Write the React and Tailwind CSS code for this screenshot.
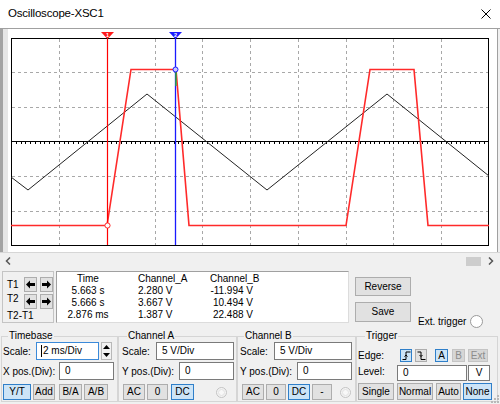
import React from 'react'

const sans = "font-['Liberation_Sans',Arial,sans-serif]"

function Btn({ className = '', active, disabled, children }) {
  const look = active
    ? 'bg-[#cce4f7] border-[#2f7fc9]'
    : disabled
    ? 'bg-[#d6d6d6] border-[#c4c4c4] text-[#8c8c8c]'
    : 'bg-[#e1e1e1] border-[#adadad]'
  return (
    <div className={`flex items-center justify-center border text-[10px] leading-none ${look} ${className}`}>
      {children}
    </div>
  )
}

function Field({ className = '', focused, children }) {
  return (
    <div
      className={`flex items-center bg-white border text-[10px] leading-none ${
        focused ? 'border-[#3b8ad9]' : 'border-[#7a7a7a]'
      } ${className}`}
    >
      {children}
    </div>
  )
}

function Radio({ className = '' }) {
  return (
    <div className={`flex items-center justify-center w-[11px] h-[11px] rounded-full border border-[#c4c4c4] bg-[#f4f4f4] ${className}`}>
      <div className="w-[7px] h-[7px] rounded-full border border-[#e2e2e2] bg-[#f8f8f8]" />
    </div>
  )
}

function Arrow({ dir }) {
  return (
    <Btn className="w-[13px] h-[15px] bg-[#dadada]">
      <svg width="9" height="9" viewBox="0 0 9 9">
        {dir === 'left' ? (
          <polygon points="0,4.5 4,0.5 4,3 9,3 9,6 4,6 4,8.5" fill="#000" />
        ) : (
          <polygon points="9,4.5 5,0.5 5,3 0,3 0,6 5,6 5,8.5" fill="#000" />
        )}
      </svg>
    </Btn>
  )
}

function Scope() {
  // grid columns, leaving out the one under cursor 1
  const vx = [59, 155, 202, 250, 298, 346, 393, 441]
  const hy = [72, 107, 176, 211]
  const ticks = []
  for (let i = 1; i < 100; i++) ticks.push(Math.round(11 + i * 4.78) + 0.5)
  const red = '11,225.5 107,225.5 131,69.5 176,69.5 189,225.5 346,225.5 370,69.5 414,69.5 428,225.5 489,225.5'
  const tri = '11,177 28,190 147,94 267,190 387,94 489,176'
  return (
    <svg width="489" height="223" viewBox="8 29 489 223" className="block bg-white">
      {vx.map((x) => (
        <line key={x} x1={x + 0.5} y1="39" x2={x + 0.5} y2="245" stroke="#a8a8a8" strokeDasharray="3 3" />
      ))}
      {hy.map((y) => (
        <line key={y} x1="12" y1={y + 0.5} x2="489" y2={y + 0.5} stroke="#a8a8a8" strokeDasharray="3 3" />
      ))}
      <line x1="11" y1="141.5" x2="489" y2="141.5" stroke="#000" />
      {ticks.filter((x) => x < 489).map((x) => (
        <line key={x} x1={x} y1="141" x2={x} y2="144" stroke="#000" />
      ))}
      <rect x="11.5" y="38.5" width="477" height="207" fill="none" stroke="#000" />
      <polyline points={tri} fill="none" stroke="#222" strokeWidth="1" />
      <polyline points={red} fill="none" stroke="#ff2a2a" strokeWidth="1.6" />
      <line x1="107.5" y1="39" x2="107.5" y2="245" stroke="#ff0000" strokeWidth="1.2" />
      <line x1="175.5" y1="38" x2="175.5" y2="245" stroke="#1a1aff" strokeWidth="1.3" />
      <line x1="176" y1="72" x2="176" y2="86" stroke="#22c022" strokeWidth="1.3" />
      <circle cx="175.5" cy="69.5" r="2.5" fill="#c8c8ff" stroke="#1a1aff" />
      <circle cx="107.5" cy="225.5" r="2.6" fill="#fff" stroke="#ff2a2a" />
      <polygon points="101,32 114,32 107.5,39" fill="#ff1a1a" />
      <text x="107.5" y="36.5" fontSize="5.5" fill="#fff" textAnchor="middle" fontFamily="Liberation Sans, sans-serif" fontWeight="bold">1</text>
      <polygon points="169,32 182,32 175.5,39" fill="#1a1aff" />
      <text x="175.5" y="36.5" fontSize="5.5" fill="#fff" textAnchor="middle" fontFamily="Liberation Sans, sans-serif" fontWeight="bold">2</text>
    </svg>
  )
}

function Chevron({ dir }) {
  return (
    <svg width="6" height="8" viewBox="0 0 6 8">
      <path d={dir === 'left' ? 'M5 0.5 L1.5 4 L5 7.5' : 'M1 0.5 L4.5 4 L1 7.5'} fill="none" stroke="#555" strokeWidth="1.5" />
    </svg>
  )
}

export default function App() {
  return (
    <div className={`relative w-[500px] h-[404px] bg-[#f0f0f0] overflow-hidden text-black ${sans}`}>
      {/* title bar */}
      <div className="h-[29px] bg-white flex items-center justify-between pl-[8px] pr-[9px] border-b border-[#a0a0a0]">
        <span className="text-[11.5px] tracking-[-0.2px]">Oscilloscope-XSC1</span>
        <svg width="10" height="10" viewBox="0 0 10 10">
          <path d="M0.5 0.5 L9.5 9.5 M9.5 0.5 L0.5 9.5" stroke="#000" strokeWidth="1" />
        </svg>
      </div>

      {/* scope display */}
      <div className="flex h-[223px]">
        <div className="w-[3px] bg-[#a3a3a3]" />
        <div className="w-[5px] bg-[#e6e6e6]" />
        <Scope />
        <div className="w-[1px] bg-[#a0a0a0]" />
        <div className="flex-1 bg-[#f0f0f0]" />
      </div>

      {/* scrollbar */}
      <div className="h-[17px] flex items-center border-t border-[#d6d6d6] bg-[#f0f0f0]">
        <div className="ml-[5px]">
          <Chevron dir="left" />
        </div>
        <div className="flex-1" />
        <div className="w-[15px] h-[9px] bg-[#cdcdcd]" />
        <div className="ml-[7px] mr-[6px]">
          <Chevron dir="right" />
        </div>
      </div>

      {/* readout row */}
      <div className="h-[58px] flex items-start pt-[2px] text-[10px]">
        <div className="ml-[2px] w-[52px] h-[52px] border border-[#c4c4c4] pl-[4px] flex flex-col">
          <div className="flex items-center h-[15px] mt-[5px]">
            <span className="w-[18px] -mt-[1px]">T1</span>
            <Arrow dir="left" />
            <div className="ml-[3px]">
              <Arrow dir="right" />
            </div>
          </div>
          <div className="flex items-center h-[14px] mt-[2px]">
            <span className="w-[18px] -mt-[6px]">T2</span>
            <Arrow dir="left" />
            <div className="ml-[3px]">
              <Arrow dir="right" />
            </div>
          </div>
          <div className="leading-[12px] mt-[2px]">T2-T1</div>
        </div>

        <div className="ml-[2px] w-[293px] h-[52px] bg-white border border-t-[#a0a0a0] border-l-[#a0a0a0] border-r-[#dcdcdc] border-b-[#dcdcdc] pt-[1px] leading-[12px]">
          {[
            ['Time', 'Channel_A', 'Channel_B'],
            ['5.663 s', '2.280 V', '-11.994 V'],
            ['5.666 s', '3.667 V', '10.494 V'],
            ['2.876 ms', '1.387 V', '22.488 V'],
          ].map((r, i) => (
            <div key={i} className="flex">
              <div className="w-[62px] text-center">{r[0]}</div>
              <div className="w-[19px]" />
              <div className="w-[62px]">{r[1]}</div>
              <div className={`w-[53px] ${i === 0 ? 'pl-[10px] text-left' : 'text-right'}`}>{r[2]}</div>
            </div>
          ))}
        </div>

        <div className="ml-[6px] w-[56px] flex flex-col">
          <Btn className="mt-[6px] h-[19px] text-[10px]">Reverse</Btn>
          <Btn className="mt-[6px] h-[20px] text-[10px]">Save</Btn>
        </div>

        <div className="ml-[7px] mt-[44px] flex items-center h-[13px]">
          <span>Ext. trigger</span>
          <div className="ml-[4px] w-[13px] h-[13px] rounded-full border border-[#9a9a9a] bg-white" />
        </div>
      </div>

      {/* control groups */}
      <div className="flex mt-[3px] text-[10px]">
        <fieldset className="ml-[1px] w-[117px] h-[72px] border border-[#d5d5d5]">
          <legend className="ml-[6px] px-[1px] leading-[12px]">Timebase</legend>
          <div className="flex items-center h-[18px] pl-[1px]">
            <span className="w-[33px]">Scale:</span>
            <Field focused className="w-[63px] h-[18px] pl-[4px]">
              <span className="w-[1px] h-[12px] bg-black" />
              <span className="ml-[1px]">2 ms/Div</span>
            </Field>
            <div className="ml-[2px] w-[11px] h-[18px] border border-[#b8b8b8] bg-[#f2f2f2] flex flex-col items-center justify-around">
              <svg width="7" height="4" viewBox="0 0 7 4">
                <polygon points="0,4 3.5,0 7,4" fill="#000" />
              </svg>
              <svg width="7" height="4" viewBox="0 0 7 4">
                <polygon points="0,0 3.5,4 7,0" fill="#000" />
              </svg>
            </div>
          </div>
          <div className="flex items-center h-[18px] mt-[2px] pl-[1px]">
            <span className="w-[56px]">X pos.(Div):</span>
            <Field className="w-[55px] h-[18px] pl-[5px]">0</Field>
          </div>
          <div className="flex mt-[4px] h-[16px] pl-[1px]">
            <Btn active className="w-[28px]">Y/T</Btn>
            <Btn className="w-[22px] ml-[2px]">Add</Btn>
            <Btn className="w-[23px] ml-[4px]">B/A</Btn>
            <Btn className="w-[24px] ml-[2px]">A/B</Btn>
          </div>
        </fieldset>

        <fieldset className="w-[119px] h-[72px] border border-[#d5d5d5]">
          <legend className="ml-[8px] px-[1px] leading-[12px]">Channel A</legend>
          <div className="flex items-center h-[18px] pl-[3px]">
            <span className="w-[34px]">Scale:</span>
            <Field className="w-[78px] h-[18px] pl-[5px]">5 V/Div</Field>
          </div>
          <div className="flex items-center h-[18px] mt-[2px] pl-[3px]">
            <span className="w-[57px]">Y pos.(Div):</span>
            <Field className="w-[55px] h-[18px] pl-[5px]">0</Field>
          </div>
          <div className="flex items-center mt-[4px] h-[16px] pl-[4px]">
            <Btn className="w-[22px] h-[16px]">AC</Btn>
            <Btn className="w-[21px] h-[16px] ml-[2px]">0</Btn>
            <Btn active className="w-[23px] h-[16px] ml-[3px]">DC</Btn>
            <Radio className="ml-[22px]" />
          </div>
        </fieldset>

        <fieldset className="w-[119px] h-[72px] border border-[#d5d5d5]">
          <legend className="ml-[6px] px-[1px] leading-[12px]">Channel B</legend>
          <div className="flex items-center h-[18px] pl-[2px]">
            <span className="w-[34px]">Scale:</span>
            <Field className="w-[78px] h-[18px] pl-[5px]">5 V/Div</Field>
          </div>
          <div className="flex items-center h-[18px] mt-[2px] pl-[2px]">
            <span className="w-[57px]">Y pos.(Div):</span>
            <Field className="w-[55px] h-[18px] pl-[5px]">0</Field>
          </div>
          <div className="flex items-center mt-[4px] h-[16px] pl-[4px]">
            <Btn className="w-[22px] h-[16px]">AC</Btn>
            <Btn className="w-[20px] h-[16px] ml-[2px]">0</Btn>
            <Btn active className="w-[22px] h-[16px] ml-[2px]">DC</Btn>
            <Btn className="w-[20px] h-[16px] ml-[2px]">-</Btn>
            <Radio className="ml-[8px]" />
          </div>
        </fieldset>

        <fieldset className="w-[142px] h-[72px] border border-[#d5d5d5]">
          <legend className="ml-[8px] px-[1px] leading-[12px]">Trigger</legend>
          <div className="flex items-center mt-[7px] h-[13px] pl-[1px]">
            <span className="w-[42px]">Edge:</span>
            <Btn active className="w-[12px] h-[13px]">
              <svg width="9" height="9" viewBox="0 0 9 9">
                <path d="M0.5 8.5 H4 V1 H8.5 M2.5 5.5 L4 4 L5.5 5.5" fill="none" stroke="#000" strokeWidth="1" />
              </svg>
            </Btn>
            <Btn className="w-[12px] h-[13px] ml-[3px]">
              <svg width="9" height="9" viewBox="0 0 9 9">
                <path d="M0.5 1 H4 V8.5 H8.5 M2.5 4 L4 5.5 L5.5 4" fill="none" stroke="#000" strokeWidth="1" />
              </svg>
            </Btn>
            <Btn active className="w-[13px] h-[13px] ml-[8px]">A</Btn>
            <Btn disabled className="w-[13px] h-[13px] ml-[4px]">B</Btn>
            <Btn disabled className="w-[20px] h-[13px] ml-[3px]">Ext</Btn>
          </div>
          <div className="flex items-center mt-[3px] h-[16px] pl-[1px]">
            <span className="w-[39px] -mt-[3px]">Level:</span>
            <Field className="w-[70px] h-[16px] pl-[5px]">0</Field>
            <Field className="w-[22px] h-[16px] ml-[1px] justify-center">V</Field>
          </div>
          <div className="flex mt-[2px] h-[17px] pl-[1px]">
            <Btn className="w-[36px]">Single</Btn>
            <Btn className="w-[36px] ml-[3px]">Normal</Btn>
            <Btn className="w-[25px] ml-[3px]">Auto</Btn>
            <Btn active className="w-[29px] ml-[2px]">None</Btn>
          </div>
        </fieldset>
      </div>

      {/* resize grip */}
      <svg className="absolute right-[1px] bottom-[1px]" width="8" height="8" viewBox="0 0 8 8">
        {[
          [6, 0], [6, 3], [3, 3], [6, 6], [3, 6], [0, 6],
        ].map(([x, y]) => (
          <rect key={`${x}-${y}`} x={x} y={y} width="2" height="2" fill="#b8b8b8" />
        ))}
      </svg>
    </div>
  )
}
